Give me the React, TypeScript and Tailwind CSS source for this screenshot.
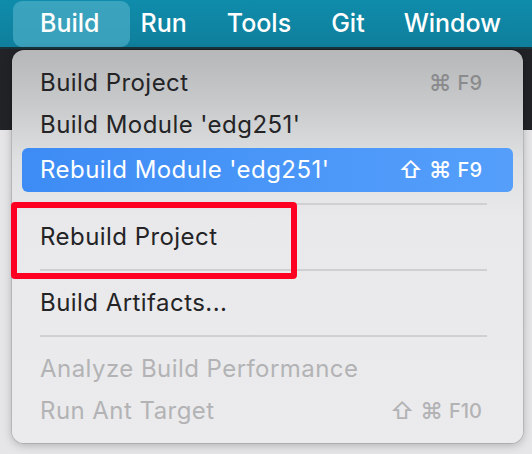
import React from "react";

const font = { fontFamily: "Inter, 'Open Sans', 'Liberation Sans', sans-serif" };

function Row({ label, keys, state }: { label: string; keys?: string[]; state?: "active" | "disabled" }) {
  const text =
    state === "active" ? "text-white" : state === "disabled" ? "text-[#b3b3b5]" : "text-[#242426]";
  const keyText =
    state === "active" ? "text-white" : state === "disabled" ? "text-[#b3b3b5]" : "text-[#8b8b8d]";
  return (
    <div
      className={`flex items-center justify-between mx-[10px] pl-[18px] pr-[31px] ${
        state === "active" ? "h-[44px] mt-[2px] rounded-[6px] bg-gradient-to-r from-[#3d8cf5] to-[#559ffb]" : "h-[42px]"
      }`}
    >
      <span className={`text-[24px] tracking-[0.45px] ${text}`}>{label}</span>
      {keys && (
        <span className={`flex items-center gap-[6px] font-medium ${keyText}`}>
          {keys.map((k, i) => (
            <span key={i} className={k.startsWith("F") ? "text-[20px]" : "text-[23px]"}>
              {k}
            </span>
          ))}
        </span>
      )}
    </div>
  );
}

function Sep() {
  return (
    <div className="py-[11px] pl-[28px] pr-[36px]">
      <div className="h-[2px] bg-[#d0d0d3]" />
    </div>
  );
}

export default function App() {
  return (
    <div className="w-[532px] h-[454px] relative overflow-hidden bg-[#e6e6e8]" style={font}>
      <div className="h-[49px] bg-gradient-to-b from-[#0f8cab] to-[#0f7f9c] border-b-[2px] border-[#17343d] flex items-center text-white text-[25px] font-medium">
        <div className="ml-[13px] h-[46px] pl-[27px] pr-[30px] flex items-center rounded-[9px] bg-[#45a9c3]/80">Build</div>
        <div className="ml-[11px]">Run</div>
        <div className="ml-[40px]">Tools</div>
        <div className="ml-[40px]">Git</div>
        <div className="ml-[39px]">Window</div>
      </div>

      <div className="bg-[linear-gradient(#222327_0px,#222327_81px,#e6e6e8_81px)] pt-[1px] pb-[10px] px-[12px] pr-[9px]">
        <div className="relative rounded-[12px] pt-[12px] pb-[11px] bg-[linear-gradient(#b5b7b9_0px,#c6c8ca_50px,#dfe0e2_110px,#e9e9eb_170px,#ebebed_100%)] shadow-[0_2px_10px_rgba(0,0,0,0.25)] ring-1 ring-black/10">
          <Row label="Build Project" keys={["⌘", "F9"]} />
          <Row label="Build Module 'edg251'" />
          <Row label="Rebuild Module 'edg251'" keys={["⇧", "⌘", "F9"]} state="active" />
          <Sep />
          <Row label="Rebuild Project" />
          <Sep />
          <Row label="Build Artifacts..." />
          <Sep />
          <Row label="Analyze Build Performance" state="disabled" />
          <Row label="Run Ant Target" keys={["⇧", "⌘", "F10"]} state="disabled" />

          <div className="absolute left-[-1px] top-[152px] w-[286px] h-[77px] border-[6px] border-[#ff0022] rounded-[4px]" />
        </div>
      </div>
    </div>
  );
}
